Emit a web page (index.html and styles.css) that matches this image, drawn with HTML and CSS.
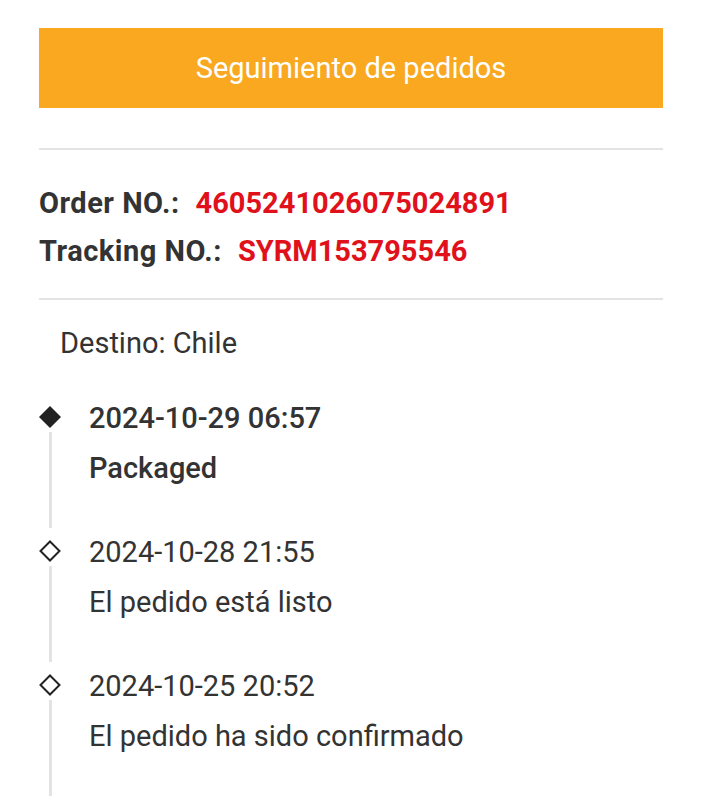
FILE: index.html
```html
<!DOCTYPE html>
<html lang="es">
<head>
<meta charset="utf-8">
<title>Seguimiento de pedidos</title>
<link rel="stylesheet" href="styles.css">
</head>
<body>
<div class="page">
  <div class="title-bar">Seguimiento de pedidos</div>
  <div class="divider first"></div>
  <div class="numbers">
    <div class="num-row"><span class="label">Order NO.:</span><span class="value">4605241026075024891</span></div>
    <div class="num-row"><span class="label">Tracking NO.:</span><span class="value">SYRM153795546</span></div>
  </div>
  <div class="divider"></div>
  <div class="destino">Destino: Chile</div>
  <div class="timeline">
    <div class="item active">
      <div class="rail">
        <svg class="dot" width="22" height="22" viewBox="0 0 22 22"><path d="M11 0 L22 11 L11 22 L0 11 Z" fill="#222"/></svg>
        <div class="line"></div>
      </div>
      <div class="content">
        <div class="date">2024-10-29 06:57</div>
        <div class="status">Packaged</div>
      </div>
    </div>
    <div class="item">
      <div class="rail">
        <svg class="dot" width="22" height="22" viewBox="0 0 22 22"><path d="M11 1.5 L20.5 11 L11 20.5 L1.5 11 Z" fill="none" stroke="#222" stroke-width="2"/></svg>
        <div class="line"></div>
      </div>
      <div class="content">
        <div class="date">2024-10-28 21:55</div>
        <div class="status">El pedido está listo</div>
      </div>
    </div>
    <div class="item">
      <div class="rail">
        <svg class="dot" width="22" height="22" viewBox="0 0 22 22"><path d="M11 1.5 L20.5 11 L11 20.5 L1.5 11 Z" fill="none" stroke="#222" stroke-width="2"/></svg>
        <div class="line"></div>
      </div>
      <div class="content">
        <div class="date">2024-10-25 20:52</div>
        <div class="status">El pedido ha sido confirmado</div>
      </div>
    </div>
  </div>
</div>
</body>
</html>
```

FILE: styles.css
```css
html, body {
  margin: 0;
  padding: 0;
  background: #fff;
}
body {
  font-family: Roboto, "Noto Sans", sans-serif;
  color: #333;
  overflow: hidden;
}
.page {
  padding: 28px 39px 0 39px;
}
.title-bar {
  height: 80px;
  background: #f9a81f;
  color: #fff;
  font-size: 29px;
  display: flex;
  align-items: center;
  justify-content: center;
}
.divider {
  height: 2px;
  background: #e3e3e3;
}
.divider.first {
  margin-top: 40px;
}
.numbers {
  padding: 29px 0 23px;
}
.num-row {
  height: 48px;
  line-height: 48px;
  font-size: 29px;
  font-weight: 700;
  white-space: nowrap;
}
.label {
  color: #333;
  margin-right: 16px;
  letter-spacing: 0.5px;
}
.value {
  color: #e0111b;
}
.destino {
  margin: 25px 0 0 21px;
  font-size: 29px;
  line-height: 36px;
}
.timeline {
  margin-top: 39px;
}
.item {
  display: flex;
  height: 134px;
}
.rail {
  width: 22px;
  display: flex;
  flex-direction: column;
  align-items: center;
  padding-top: 6px;
}
.line {
  width: 3px;
  flex: 1;
  background: #e3e3e3;
  margin: 4px 0 6px;
}
.content {
  margin-left: 28px;
}
.date, .status {
  font-size: 29px;
  line-height: 36px;
  white-space: nowrap;
}
.status {
  margin-top: 14px;
}
.item.active .date, .item.active .status {
  font-weight: 500;
}
```
